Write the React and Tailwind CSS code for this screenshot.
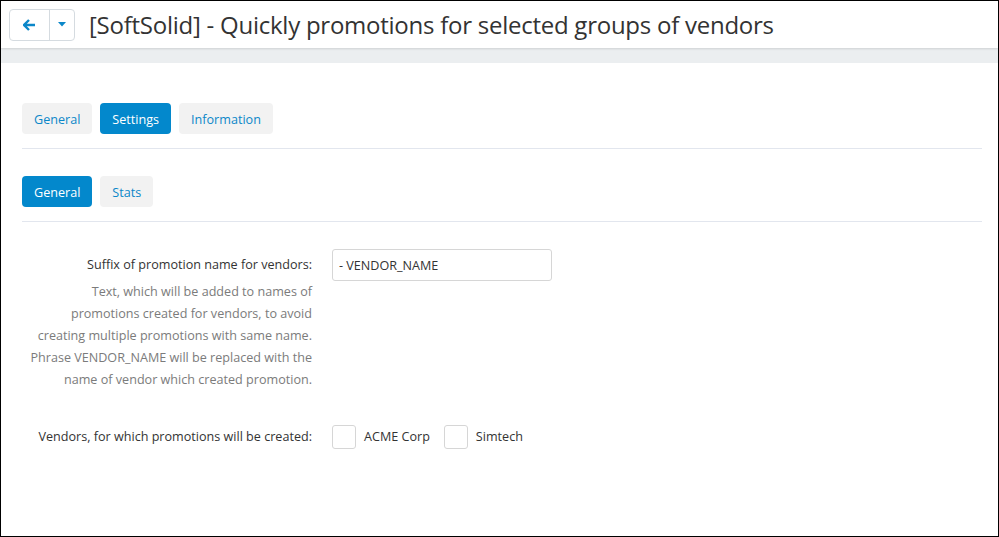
import { useState } from 'react';

const FONT = { fontFamily: '"Open Sans", "Noto Sans", "Liberation Sans", sans-serif' };

const TOP_TABS = ['General', 'Settings', 'Information'];
const SUB_TABS = ['General', 'Stats'];

function Tab({ label, active, onClick }) {
  return (
    <button
      onClick={onClick}
      className={
        active
          ? 'h-[31px] px-3 pt-[3px] rounded-[4px] bg-[#0388cc] text-white text-[12.6px]'
          : 'h-[31px] px-3 pt-[3px] rounded-[4px] bg-[#f2f2f2] text-[#0b87c9] text-[12.6px]'
      }
    >
      {label}
    </button>
  );
}

function Checkbox({ label }) {
  const [on, setOn] = useState(false);
  return (
    <label className="flex items-center gap-2 cursor-pointer">
      <span
        onClick={() => setOn(!on)}
        className="w-6 h-6 rounded-[3px] border border-[#d6d6d6] bg-white flex items-center justify-center text-[#0388cc] text-sm"
      >
        {on ? '✓' : ''}
      </span>
      <span className="text-[12.6px] text-[#333]">{label}</span>
    </label>
  );
}

export default function App() {
  const [tab, setTab] = useState('Settings');
  const [sub, setSub] = useState('General');

  return (
    <div className="w-[999px] h-[537px] border border-black bg-white overflow-hidden flex flex-col" style={FONT}>
      {/* ── header ── */}
      <header className="h-[47px] flex items-center gap-[14px] pl-2 shrink-0 shadow-[0_1px_2px_rgba(0,0,0,0.12)] relative z-10 bg-white">
        <div className="flex h-8 border border-[#d5dbe0] rounded-[4px] bg-white">
          <button className="w-10 flex items-center justify-center border-r border-[#d5dbe0]">
            <svg width="13" height="12" viewBox="0 0 13 12">
              <path d="M1 6h11M6 1L1 6l5 5" stroke="#0b87c9" strokeWidth="2.4" fill="none" strokeLinejoin="miter" />
            </svg>
          </button>
          <button className="w-6 flex items-center justify-center">
            <svg width="8" height="5" viewBox="0 0 8 5">
              <path d="M0 0h8L4 4.5z" fill="#0b87c9" />
            </svg>
          </button>
        </div>
        <h1 className="text-[24px] text-[#333] leading-none tracking-[-0.25px]">
          [SoftSolid] - Quickly promotions for selected groups of vendors
        </h1>
      </header>
      <div className="h-[15px] bg-[#ebeef0] shrink-0" />

      {/* ── content ── */}
      <main className="px-[21px] pt-10">
        <div className="flex gap-2">
          {TOP_TABS.map(t => (
            <Tab key={t} label={t} active={tab === t} onClick={() => setTab(t)} />
          ))}
        </div>
        <div className="h-px bg-[#e2e6ee] mt-[14px] mr-[-5px]" />

        <div className="flex gap-2 mt-[27px]">
          {SUB_TABS.map(t => (
            <Tab key={t} label={t} active={sub === t} onClick={() => setSub(t)} />
          ))}
        </div>
        <div className="h-px bg-[#e2e6ee] mt-[14px] mr-[-5px]" />

        <div className="flex mt-[27px]">
          <div className="w-[290px] text-right">
            <div className="text-[12.6px] text-[#333] pt-[7px] leading-[18px]">Suffix of promotion name for vendors:</div>
            <p className="text-[12.6px] text-[#7b7b7b] leading-[22px] mt-[7px] whitespace-nowrap">
              Text, which will be added to names of<br />
              promotions created for vendors, to avoid<br />
              creating multiple promotions with same name.<br />
              Phrase VENDOR_NAME will be replaced with the<br />
              name of vendor which created promotion.
            </p>
          </div>
          <div className="ml-[20px]">
            <input
              defaultValue="- VENDOR_NAME"
              className="w-[220px] h-8 border border-[#d6d6d6] rounded-[3px] px-[6px] text-[12.6px] text-[#333] outline-none"
            />
          </div>
        </div>

        <div className="flex items-center mt-[34px]">
          <div className="w-[290px] text-right text-[12.6px] text-[#333]">Vendors, for which promotions will be created:</div>
          <div className="ml-[20px] flex items-center gap-[14px]">
            <Checkbox label="ACME Corp" />
            <Checkbox label="Simtech" />
          </div>
        </div>
      </main>
    </div>
  );
}
